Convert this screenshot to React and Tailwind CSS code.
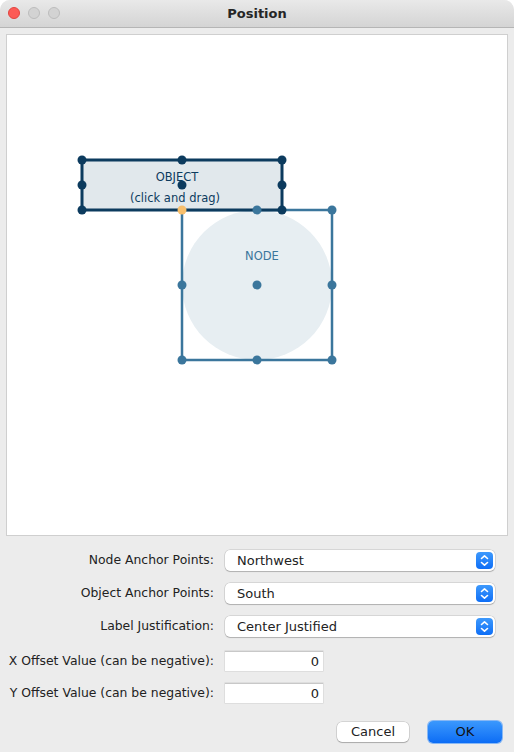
import React from "react";

const FONT = { fontFamily: '"DejaVu Sans", "Liberation Sans", sans-serif' };

function Dot({ cx, cy, fill }) {
  return <circle cx={cx} cy={cy} r="4.5" fill={fill} />;
}

function Canvas() {
  const dark = "#0c3b5e";
  const mid = "#3b769c";
  const objDots = [
    [76, 126], [176, 126], [276, 126],
    [76, 151], [176, 151], [276, 151],
    [76, 176], [276, 176],
  ];
  const nodeDots = [
    [251, 176], [326, 176],
    [176, 251], [251, 251], [326, 251],
    [176, 326], [251, 326], [326, 326],
  ];
  return (
    <div className="mx-[6px] mt-[6px] h-[502px] border border-[#cfcfcf] bg-white">
      <svg width="500" height="500" viewBox="1 1 500 500" className="block">
        <circle cx="251" cy="251" r="75" fill="#e7eef2" />
        <rect x="176" y="176" width="150" height="150" fill="none" stroke={mid} strokeWidth="2.5" />
        <rect x="76" y="126" width="200" height="50" fill="#e1e8ec" stroke={dark} strokeWidth="3" />
        {nodeDots.map(([x, y], i) => (
          <Dot key={"n" + i} cx={x} cy={y} fill={mid} />
        ))}
        {objDots.map(([x, y], i) => (
          <Dot key={"o" + i} cx={x} cy={y} fill={dark} />
        ))}
        <Dot cx={176} cy={176} fill="#f8bf6c" />
        <text x="171" y="147" textAnchor="middle" fontSize="11.5" fill={dark} style={FONT}>OBJECT</text>
        <text x="169" y="168" textAnchor="middle" fontSize="11.5" fill={dark} style={FONT}>(click and drag)</text>
        <text x="256" y="226" textAnchor="middle" fontSize="11.5" fill={mid} style={FONT}>NODE</text>
      </svg>
    </div>
  );
}

function Select({ value }) {
  return (
    <div className="relative flex h-[21px] w-[270px] items-center rounded-[5px] bg-white pl-[12px] text-[13px] text-[#222] shadow-[0_0_0_0.5px_rgba(0,0,0,0.18),0_1px_1px_rgba(0,0,0,0.18)]">
      <span>{value}</span>
      <div className="absolute right-[2px] top-[2px] flex h-[17px] w-[17px] items-center justify-center rounded-[4px] bg-gradient-to-b from-[#3d99fc] to-[#0d6ef6]">
        <svg width="9" height="13" viewBox="0 0 9 13" fill="none" stroke="white" strokeWidth="1.6" strokeLinecap="round" strokeLinejoin="round">
          <path d="M1.5 4.5 L4.5 1.8 L7.5 4.5" />
          <path d="M1.5 8.5 L4.5 11.2 L7.5 8.5" />
        </svg>
      </div>
    </div>
  );
}

function TextField({ value }) {
  return (
    <div className="flex h-[20px] w-[98px] items-center justify-end border-t border-[#c8c8c8] bg-white pr-[4px] text-[13px] text-[#222] shadow-[0_0_0_0.5px_rgba(0,0,0,0.12)]">
      {value}
    </div>
  );
}

function Row({ label, children, className = "" }) {
  return (
    <div className={"flex items-center " + className}>
      <div className="w-[215px] whitespace-nowrap pr-[1px] text-right text-[12.4px] text-[#222]">{label}</div>
      <div className="ml-[10px]">{children}</div>
    </div>
  );
}

export default function App() {
  return (
    <div className="h-[752px] w-[514px] overflow-hidden rounded-t-[10px] bg-[#ececec]" style={FONT}>
      <div className="relative flex h-[28px] items-center justify-center border-b border-[#b5b5b5] bg-gradient-to-b from-[#e9e9e9] to-[#d4d4d4]">
        <div className="absolute left-[8px] top-[7px] flex gap-[8px]">
          <div className="h-[12px] w-[12px] rounded-full border border-[#e1443f] bg-[#fc5a55]" />
          <div className="h-[12px] w-[12px] rounded-full border border-[#bcbcbc] bg-[#d3d3d3]" />
          <div className="h-[12px] w-[12px] rounded-full border border-[#bcbcbc] bg-[#d3d3d3]" />
        </div>
        <div className="text-[13px] font-bold text-[#262626]">Position</div>
      </div>
      <Canvas />
      <div className="mt-[14px] flex flex-col">
        <Row label="Node Anchor Points:" className="h-[21px]"><Select value="Northwest" /></Row>
        <Row label="Object Anchor Points:" className="mt-[12px] h-[21px]"><Select value="South" /></Row>
        <Row label="Label Justification:" className="mt-[12px] h-[21px]"><Select value="Center Justified" /></Row>
        <Row label="X Offset Value (can be negative):" className="mt-[14px] h-[20px]"><TextField value="0" /></Row>
        <Row label="Y Offset Value (can be negative):" className="mt-[12px] h-[20px]"><TextField value="0" /></Row>
      </div>
      <div className="mt-[18px] flex justify-end gap-[19px] pr-[12px]">
        <button className="mt-[1px] h-[20px] w-[72px] rounded-[5px] bg-white text-[13px] text-[#222] shadow-[0_0_0_0.5px_rgba(0,0,0,0.2),0_1px_1px_rgba(0,0,0,0.2)]">Cancel</button>
        <button className="h-[22px] w-[74px] rounded-[5px] bg-gradient-to-b from-[#3a98fd] to-[#0b6cf5] text-[13px] text-[#111] shadow-[0_0_0_1px_rgba(70,150,250,0.6)]">OK</button>
      </div>
    </div>
  );
}
